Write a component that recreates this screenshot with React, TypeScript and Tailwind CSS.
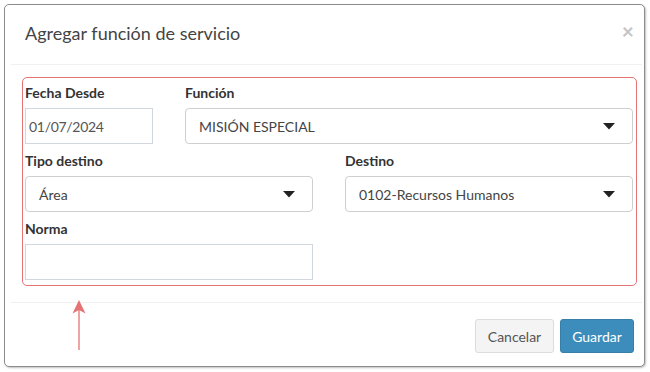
import React from "react";

const font = { fontFamily: "Lato, 'Open Sans', sans-serif" };

function Caret() {
  return (
    <svg width="12" height="7" viewBox="0 0 12 7" className="shrink-0">
      <path d="M0 0 L12 0 L6 6.5 Z" fill="#222" />
    </svg>
  );
}

function Select({ value }: { value: string }) {
  return (
    <div className="h-[36px] w-full border border-[#cfcfcf] rounded-[4px] bg-white flex items-center pl-[13px] pr-[17px] justify-between">
      <span className="text-[14px] text-[#444]">{value}</span>
      <Caret />
    </div>
  );
}

function Label({ children }: { children: React.ReactNode }) {
  return (
    <div className="h-[20px] mb-[4px] text-[14px] leading-[17px] font-bold text-[#333]">
      {children}
    </div>
  );
}

export default function App() {
  return (
    <div className="w-[650px] h-[372px] bg-white pt-[4px] pl-[4px]" style={font}>
      <div className="relative w-[641px] h-[363px] border border-[#8c8c8c] rounded-[5px] bg-white shadow-[1px_1px_2px_rgba(0,0,0,0.25)] flex flex-col">
        {/* header */}
        <div className="h-[60px] flex flex-col">
          <div className="flex-1 flex justify-between pl-[20px] pr-[10px]">
            <div className="text-[18px] text-[#444] pt-[16px] leading-[24px]">
              Agregar función de servicio
            </div>
            <div className="text-[21px] font-bold text-[#c4c4c4] leading-none pt-[15px]">×</div>
          </div>
          <div className="h-px bg-[#f0f0f0] ml-[6px] mr-[2px]" />
        </div>
        {/* body */}
        <div className="pt-[12px] pl-[17px] pr-[7px]">
          <div className="border border-[#e57373] rounded-[5px] pt-[6px] pl-[2px] pr-[3px] pb-[5px]">
            <div className="flex gap-[32px] mb-[8px]">
              <div className="w-[128px]">
                <Label>Fecha Desde</Label>
                <div className="h-[36px] border border-[#d2d6de] flex items-center pl-[3px] text-[14px] text-[#555] tracking-[-0.3px]">
                  01/07/2024
                </div>
              </div>
              <div className="flex-1">
                <Label>Función</Label>
                <Select value="MISIÓN ESPECIAL" />
              </div>
            </div>
            <div className="grid grid-cols-2 gap-[32px] mb-[8px]">
              <div>
                <Label>Tipo destino</Label>
                <Select value="Área" />
              </div>
              <div>
                <Label>Destino</Label>
                <Select value="0102-Recursos Humanos" />
              </div>
            </div>
            <div className="grid grid-cols-2 gap-[32px]">
              <div>
                <Label>Norma</Label>
                <div className="h-[36px] border border-[#d2d6de]" />
              </div>
              <div />
            </div>
          </div>
        </div>
        {/* footer */}
        <div className="mt-[16px] h-px bg-[#f0f0f0] ml-[6px] mr-[2px]" />
        <div className="flex justify-end gap-[6px] pt-[16px] pr-[10px]">
          <button className="h-[34px] w-[79px] rounded-[3px] border border-[#dcdcdc] bg-[#f4f4f4] text-[14px] text-[#555]">
            Cancelar
          </button>
          <button className="h-[34px] w-[74px] rounded-[3px] border border-[#367fa9] bg-[#3c8dbc] text-[14px] text-white">
            Guardar
          </button>
        </div>
        {/* annotation arrow */}
        <svg className="absolute left-[67px] top-[295px]" width="14" height="50" viewBox="0 0 14 50">
          <line x1="7" y1="4" x2="7" y2="50" stroke="#e57373" strokeWidth="1.3" />
          <path d="M7 0 L13.5 13.5 L7 10 L0.5 13.5 Z" fill="#e57373" />
        </svg>
      </div>
    </div>
  );
}
